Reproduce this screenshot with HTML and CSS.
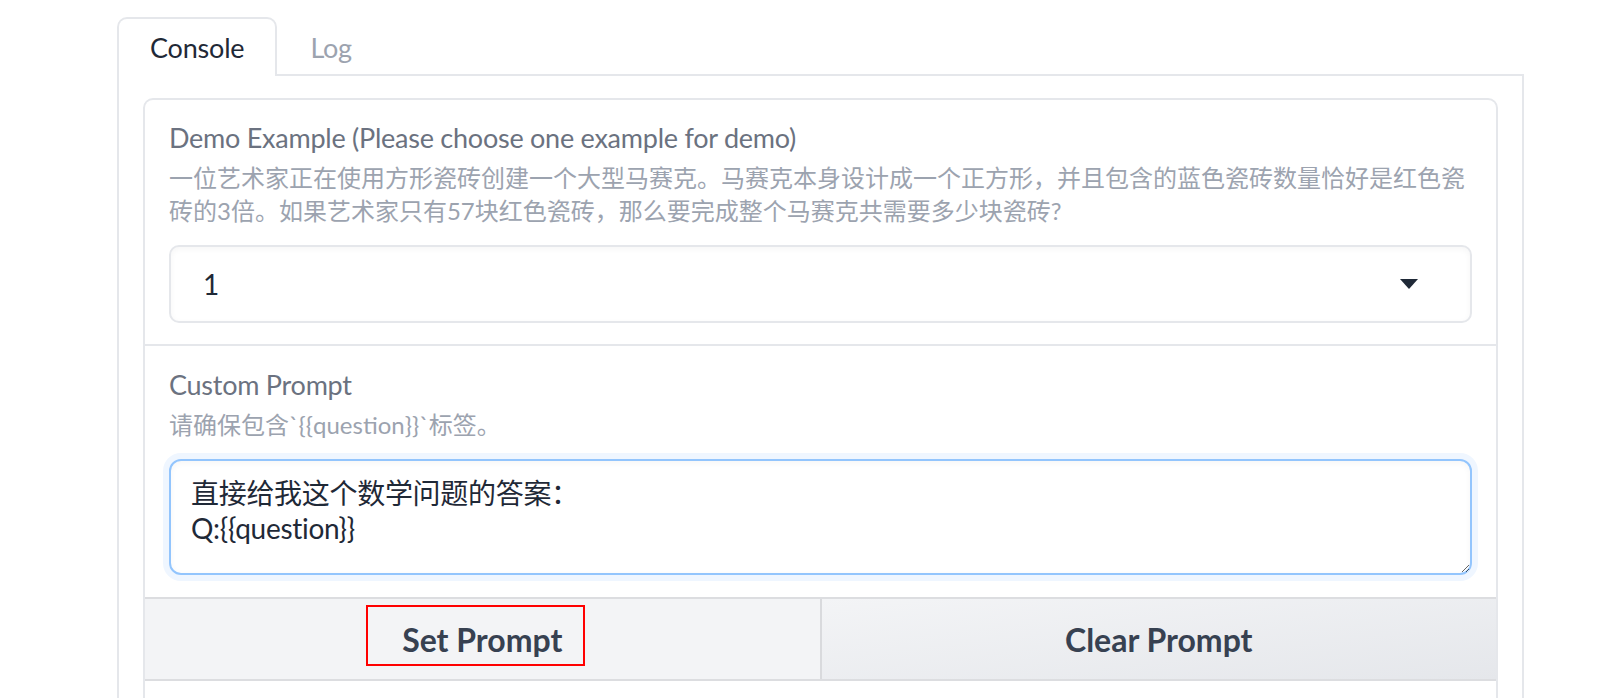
FILE: index.html
```html
<!DOCTYPE html>
<html lang="zh">
<head>
<meta charset="utf-8">
<title>Console</title>
<link rel="stylesheet" href="styles.css">
</head>
<body>
<div class="tabs">
  <div class="tab-nav">
    <button class="tab selected">Console</button>
    <button class="tab">Log</button>
  </div>
  <div class="panel">
    <div class="card">
      <div class="block">
        <div class="label">Demo Example (Please choose one example for demo)</div>
        <div class="info">一位艺术家正在使用方形瓷砖创建一个大型马赛克。马赛克本身设计成一个正方形，并且包含的蓝色瓷砖数量恰好是红色瓷砖的3倍。如果艺术家只有57块红色瓷砖，那么要完成整个马赛克共需要多少块瓷砖?</div>
        <div class="select">
          <span class="select-value">1</span>
          <svg class="caret" width="18" height="10" viewBox="0 0 18 10"><path d="M0 0 H18 L9 10 Z" fill="#1f2937"/></svg>
        </div>
      </div>
      <div class="block block-second">
        <div class="label">Custom Prompt</div>
        <div class="info">请确保包含`{{question}}`标签。</div>
        <textarea class="prompt">直接给我这个数学问题的答案：
Q:{{question}}</textarea>
      </div>
      <div class="btn-row">
        <button class="btn btn-set">Set Prompt<span class="highlight"></span></button>
        <button class="btn btn-clear">Clear Prompt</button>
      </div>
      <div class="below"></div>
    </div>
  </div>
</div>
</body>
</html>
```
FILE: styles.css
```css
* { box-sizing: border-box; }
html, body {
  margin: 0;
  padding: 0;
  background: #ffffff;
  height: 698px;
  overflow: hidden;
  font-family: Lato, "Noto Sans CJK SC", sans-serif;
}
.tabs {
  margin: 17px 0 0 117px;
  width: 1407px;
}
.tab-nav {
  display: flex;
  border-bottom: 2px solid #e5e7eb;
  height: 59px;
}
.tab {
  font-family: inherit;
  font-size: 27px;
  letter-spacing: -0.2px;
  background: transparent;
  border: 2px solid transparent;
  border-bottom: none;
  padding: 0 31px;
  height: 59px;
  line-height: 54px;
  color: #9ca3af;
  cursor: pointer;
}
.tab.selected {
  color: #1f2937;
  background: #ffffff;
  border-color: #e5e7eb;
  border-radius: 10px 10px 0 0;
  height: 59px;
  margin-bottom: -2px;
  position: relative;
}
.panel {
  border: 2px solid #e5e7eb;
  border-top: none;
  padding: 22px 24px 0 24px;
  height: 700px;
}
.card {
  border: 2px solid #e5e7eb;
  border-radius: 10px 10px 0 0;
  background: #e5e7eb;
  display: flex;
  flex-direction: column;
  gap: 2px;
  overflow: hidden;
}
.block {
  background: #ffffff;
  padding: 20px 24px 21px 24px;
}
.block-second {
  padding-top: 21px;
  padding-bottom: 22px;
}
.label {
  font-size: 27px;
  letter-spacing: -0.25px;
  line-height: 36px;
  color: #6b7280;
}
.info {
  font-size: 24px;
  line-height: 33px;
  color: #9ca3af;
  margin-top: 5px;
  margin-bottom: 18px;
}
.select {
  height: 78px;
  border: 2px solid #e5e7eb;
  border-radius: 10px;
  box-shadow: inset 0 2px 6px rgba(0, 0, 0, 0.04);
  display: flex;
  align-items: center;
  justify-content: space-between;
  padding: 0 52px 0 32px;
}
.select-value {
  font-size: 28px;
  color: #1f2937;
}
.prompt {
  display: block;
  width: 100%;
  height: 116px;
  font-family: inherit;
  font-size: 28px;
  letter-spacing: -0.3px;
  line-height: 35px;
  color: #1f2937;
  padding: 15px 20px;
  border: 2px solid #93c5fd;
  border-radius: 12px;
  box-shadow: 0 0 0 6px #eff6ff, inset 0 2px 6px rgba(0, 0, 0, 0.04);
  outline: none;
  resize: vertical;
  background: #ffffff;
}
.btn-row {
  display: flex;
  gap: 2px;
  background: #d9dadd;
  border-top: 2px solid #dcdde0;
  border-bottom: 2px solid #dcdde0;
  margin-top: -2px;
}
.btn {
  flex: 1;
  height: 80px;
  border: none;
  font-family: inherit;
  font-size: 32px;
  font-weight: 700;
  color: #374151;
  cursor: pointer;
}
.btn-set {
  background: #f3f4f6;
  position: relative;
}
.btn-clear {
  background: linear-gradient(to bottom right, #f3f4f6, #e5e7eb);
}
.highlight {
  position: absolute;
  left: 221px;
  top: 6px;
  width: 219px;
  height: 61px;
  border: 2px solid #ff0000;
}
.below {
  background: #ffffff;
  height: 200px;
  margin-top: -2px;
}
```
